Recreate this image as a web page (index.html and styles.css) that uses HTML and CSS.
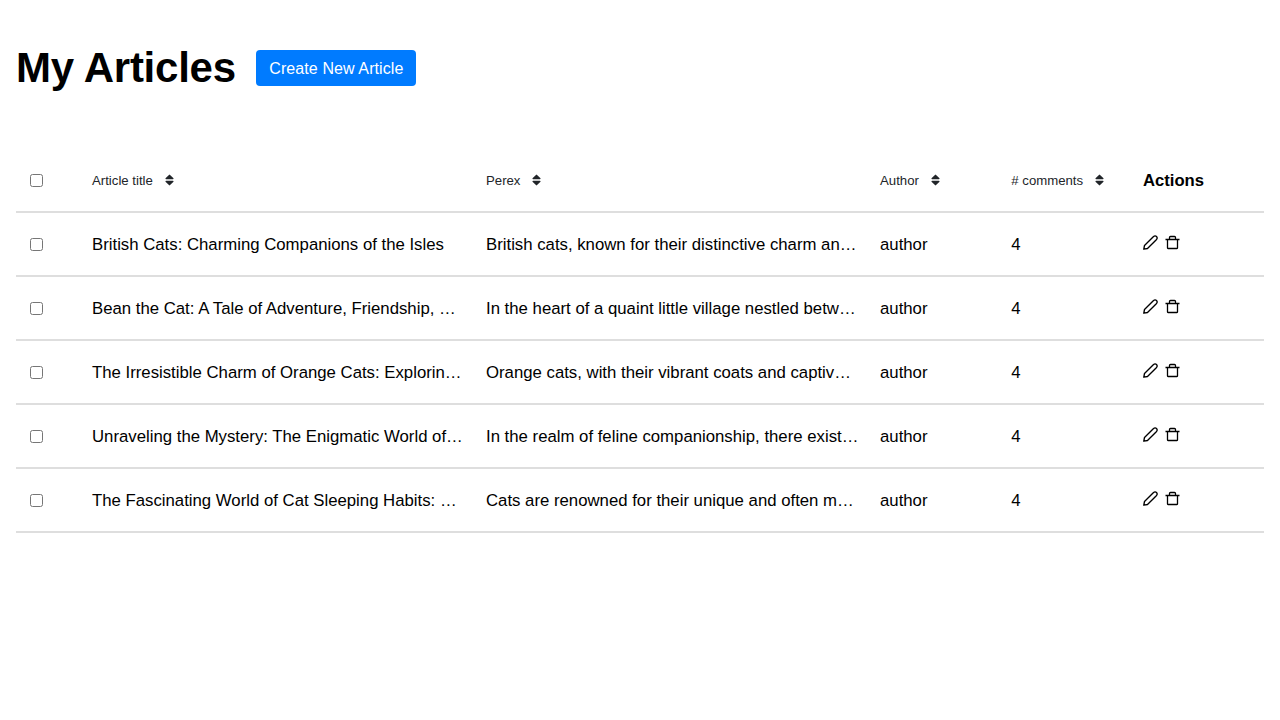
FILE: index.html
```
<!DOCTYPE html>
<html lang="en">
<head>
<meta charset="utf-8">
<title>My Articles</title>
<link rel="stylesheet" href="styles.css">
</head>
<body>
<svg width="0" height="0" class="defs">
<symbol id="sort" viewBox="0 0 9 12"><path d="M4.500.4 8.500 4.200Q8.800 5.300 7.800 5.300H1.200Q.2 5.300.5 4.200ZM4.500 11.600 8.500 7.800Q8.800 6.700 7.800 6.700H1.200Q.2 6.700.5 7.800Z" fill="currentColor"/></symbol>
<symbol id="pencil" viewBox="0 0 15 15"><path d="M.8 14.200 1.500 10.500 10.300 1.700Q12.100.1 13.500 1.500 14.900 2.900 13.300 4.700L4.500 13.500Z" fill="none" stroke="currentColor" stroke-width="1.350" stroke-linejoin="round"/></symbol>
<symbol id="trash" viewBox="0 0 15 15"><path d="M.5 4.500H14.500M4.500 4V2.500Q4.500 1.500 5.500 1.500H9.500Q10.500 1.500 10.500 2.500V4M2.500 4.500V13Q2.500 13.500 3 13.500H12Q12.500 13.500 12.500 13V4.500" fill="none" stroke="currentColor" stroke-width="1.300"/></symbol>
</svg>
<main class="page">
<header class="heading"><h1>My Articles</h1><button class="create">Create New Article</button></header>
<section class="table">
<div class="row"><div><input type="checkbox"></div><div class="sort">Article title<svg><use href="#sort"/></svg></div><div class="sort">Perex<svg><use href="#sort"/></svg></div><div class="sort">Author<svg><use href="#sort"/></svg></div><div class="sort"># comments<svg><use href="#sort"/></svg></div><div class="strong">Actions</div></div>
<div class="row"><div><input type="checkbox"></div><div class="text">British Cats: Charming Companions of the Isles</div><div class="text">British cats, known for their distinctive charm an…</div><div class="text">author</div><div class="text">4</div><div class="actions"><svg><use href="#pencil"/></svg><svg><use href="#trash"/></svg></div></div>
<div class="row"><div><input type="checkbox"></div><div class="text">Bean the Cat: A Tale of Adventure, Friendship, …</div><div class="text">In the heart of a quaint little village nestled betw…</div><div class="text">author</div><div class="text">4</div><div class="actions"><svg><use href="#pencil"/></svg><svg><use href="#trash"/></svg></div></div>
<div class="row"><div><input type="checkbox"></div><div class="text">The Irresistible Charm of Orange Cats: Explorin…</div><div class="text">Orange cats, with their vibrant coats and captiv…</div><div class="text">author</div><div class="text">4</div><div class="actions"><svg><use href="#pencil"/></svg><svg><use href="#trash"/></svg></div></div>
<div class="row"><div><input type="checkbox"></div><div class="text">Unraveling the Mystery: The Enigmatic World of…</div><div class="text">In the realm of feline companionship, there exist…</div><div class="text">author</div><div class="text">4</div><div class="actions"><svg><use href="#pencil"/></svg><svg><use href="#trash"/></svg></div></div>
<div class="row"><div><input type="checkbox"></div><div class="text">The Fascinating World of Cat Sleeping Habits: …</div><div class="text">Cats are renowned for their unique and often m…</div><div class="text">author</div><div class="text">4</div><div class="actions"><svg><use href="#pencil"/></svg><svg><use href="#trash"/></svg></div></div>
</section>
</main>
</body>
</html>
```
FILE: styles.css
```
* { box-sizing: border-box; }
body { margin: 0; font: 16px/24px "Liberation Sans", Arial, sans-serif; color: #000; background: #fff; }
.defs { display: block; }
.page { padding: 36px 16px 0; }
.heading { display: flex; align-items: center; gap: 20px; height: 64px; }
h1 { margin: 0; font-size: 42px; line-height: 64px; letter-spacing: -0.25px; white-space: nowrap; width: 220.400px; }
.create { width: 160px; height: 36px; padding: 1px 0 0; margin-top: -1px; border: 0; border-radius: 4px; background: #007bff; color: #fff; font: 16px/35px "Liberation Sans", Arial, sans-serif; letter-spacing: 0.1px; white-space: nowrap; }
.table { margin-top: 49px; }
.row { display: grid; grid-template-columns: 62px 394px 394px 131.300px 131.700px 1fr; height: 64px; align-items: center; border-bottom: 2px solid #dedede; }
.row > div { padding-left: 14px; min-width: 0; white-space: nowrap; }
.row > .text { padding-top: 2px; font-size: 16.750px; }
input { display: block; margin: 0; width: 13px; height: 13px; }
.row > .sort { display: flex; align-items: center; padding-top: 1px; font-size: 13.200px; color: #212529; }
.sort svg { width: 9px; height: 12px; margin: -1px 0 0 12px; }
.row > .strong { padding-top: 1px; font-weight: bold; font-size: 16.650px; }
.actions { display: flex; gap: 7px; margin-bottom: 3px; }
.actions svg { width: 15px; height: 15px; }
```
